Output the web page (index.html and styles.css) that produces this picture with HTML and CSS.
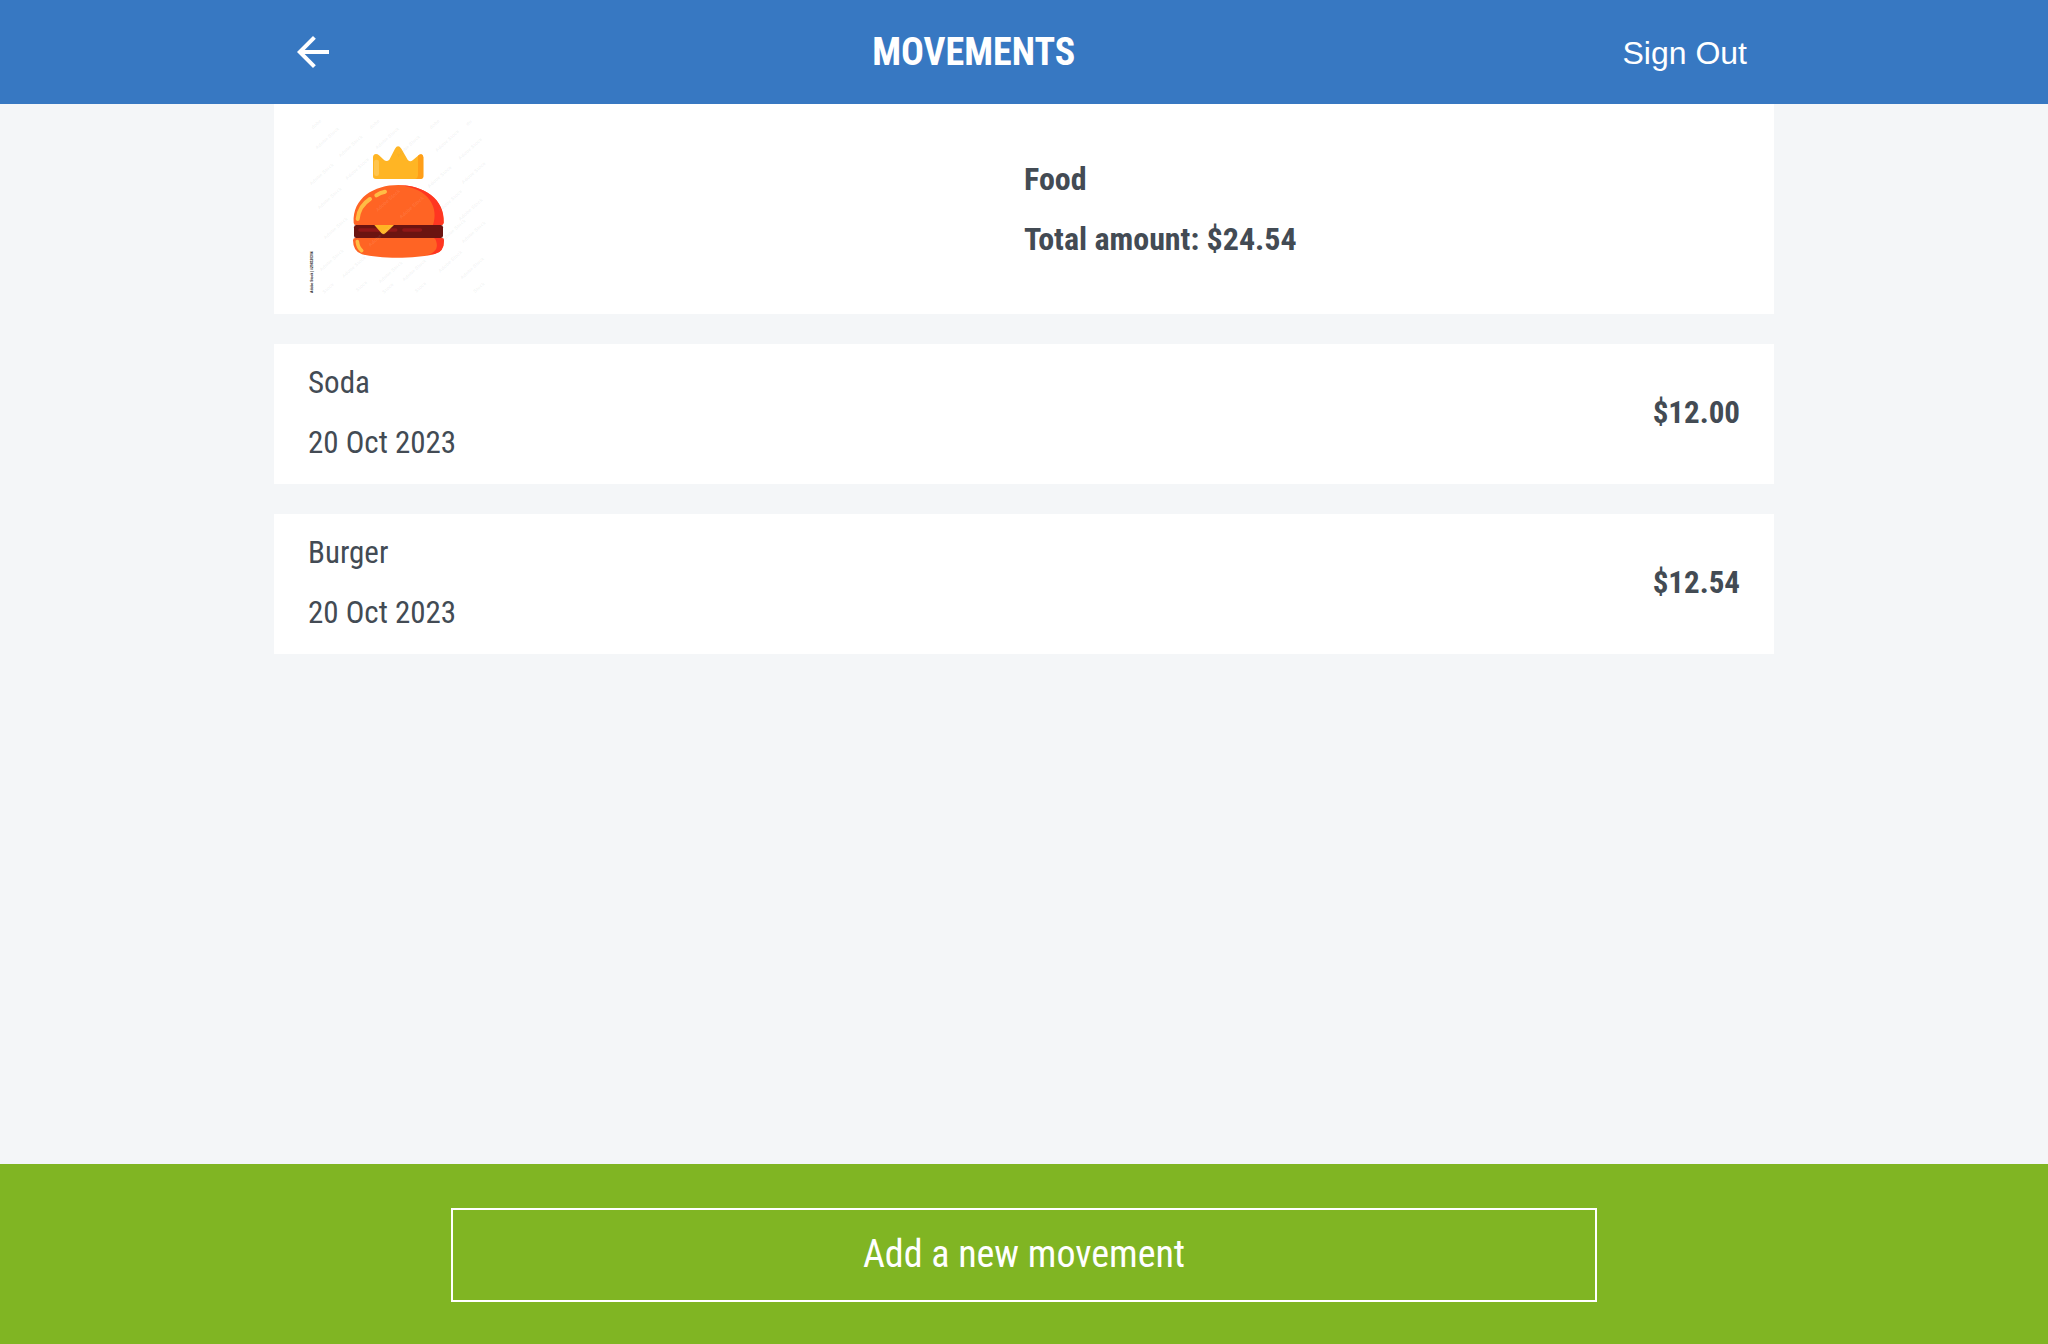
FILE: index.html
```html
<!DOCTYPE html>
<html lang="en">
<head>
<meta charset="utf-8">
<meta name="viewport" content="width=device-width, initial-scale=1">
<title>Movements</title>
<link rel="stylesheet" href="styles.css">
</head>
<body>
<header class="topbar">
  <nav class="topbar-inner">
    <a class="back" href="#" aria-label="Back">
      <svg class="back-icon" viewBox="0 0 24 24" aria-hidden="true"><path fill="currentColor" d="M20 11H7.83l5.59-5.59L12 4l-8 8 8 8 1.41-1.41L7.83 13H20v-2z"/></svg>
    </a>
    <h1 class="title">MOVEMENTS</h1>
    <button class="sign-out" type="button">Sign Out</button>
  </nav>
</header>
<main class="content">
  <section class="card summary">
    <div class="summary-half">
      <svg class="picture" viewBox="54 48 540 540" role="img" aria-label="Food">
        <path fill="#ffb524" d="M249 172Q249 163 258 162Q263 162 267 166L283 181Q291 186 298 179L315 146Q324 132 334 146L353 179Q360 187 368 181L384 167Q398 157 400 171V229Q400 237 391 237H258Q249 237 249 229Z"/>
        <path fill="#ff9e18" d="M384 167Q398 157 400 171V229Q400 237 391 237H376Q384 234 384 226Z"/>
        <rect fill="#ffc44d" x="252" y="179" width="15" height="49" rx="7"/>
        <path fill="#ff6424" d="M191 368C187 294 252 255 325 255S464 296 461 368Q460 375 454 375H197Q191 375 191 368Z"/>
        <path fill="#ff3621" d="M325 255C404 256 465 298 461 368Q460 375 454 375H429C446 326 421 264 325 255Z"/>
        <path fill="none" stroke="#ffbd45" stroke-width="12" stroke-linecap="round" d="M203 357Q207 318 240 297M259 286Q270 278 285 275"/>
        <rect fill="#6b1411" x="192" y="375" width="267" height="39" rx="7"/>
        <path fill="none" stroke="#8f1717" stroke-width="11" stroke-linecap="round" d="M210 390H317M342 390H391"/>
        <path fill="#ffb524" d="M253 375H312L286 400Q280 405 274 399Z"/>
        <path fill="#ff6424" d="M196 414H455Q462 414 462 421Q462 457 434 462C376 477 270 477 216 463Q189 455 189 421Q189 414 196 414Z"/>
        <path fill="#ff3621" d="M432 414H455Q462 414 462 421Q462 457 434 462L411 466Q448 454 439 425Q438 417 432 414Z"/>
        <path fill="none" stroke="#ffbd45" stroke-width="11" stroke-linecap="round" d="M202 425Q204 443 215 452"/>
        <g class="watermark">
          <text transform="translate(82 76) rotate(-42)">dobe</text>
          <text transform="translate(257 76) rotate(-42)">dobe</text>
          <text transform="translate(437 76) rotate(-42)">dobe</text>
          <text transform="translate(540 72) rotate(-42)">do</text>
          <text transform="translate(115 118) rotate(-42)">Adobe Stock</text>
          <text transform="translate(185 142) rotate(-42)">Adobe Stock</text>
          <text transform="translate(295 118) rotate(-42)">Adobe Stock</text>
          <text transform="translate(358 142) rotate(-42)">Adobe Stock</text>
          <text transform="translate(475 126) rotate(-42)">Adobe Stock</text>
          <text transform="translate(544 150) rotate(-42)">Adobe Stock</text>
          <text transform="translate(98 226) rotate(-42)">Adobe Stock</text>
          <text transform="translate(205 210) rotate(-42)">Adobe Stock</text>
          <text transform="translate(452 234) rotate(-42)">Adobe Stock</text>
          <text transform="translate(554 222) rotate(-42)">Adobe Stock</text>
          <text transform="translate(122 298) rotate(-42)">Adobe Stock</text>
          <text transform="translate(484 306) rotate(-42)">Adobe Stock</text>
          <text transform="translate(545 332) rotate(-42)">Adobe Stock</text>
          <text transform="translate(140 388) rotate(-42)">Adobe Stock</text>
          <text transform="translate(494 394) rotate(-42)">Adobe Stock</text>
          <text transform="translate(554 400) rotate(-42)">Adobe Stock</text>
          <text transform="translate(128 484) rotate(-42)">Adobe Stock</text>
          <text transform="translate(195 504) rotate(-42)">Adobe Stock</text>
          <text transform="translate(305 520) rotate(-42)">Adobe Stock</text>
          <text transform="translate(376 514) rotate(-42)">Adobe Stock</text>
          <text transform="translate(484 488) rotate(-42)">Adobe Stock</text>
          <text transform="translate(550 508) rotate(-42)">Adobe Stock</text>
          <text transform="translate(118 568) rotate(-42)">Stock</text>
          <text transform="translate(218 562) rotate(-42)">Stock</text>
          <text transform="translate(297 568) rotate(-42)">Stock</text>
          <text transform="translate(395 565) rotate(-42)">Stock</text>
          <text transform="translate(570 566) rotate(-42)">Stock</text>
        </g>
        <g class="watermark watermark-tint">
          <text transform="translate(297 305) rotate(-42)">Adobe Stock</text>
          <text transform="translate(368 326) rotate(-42)">Adobe Stock</text>
          <text transform="translate(275 410) rotate(-42)">Adobe Stock</text>
        </g>
        <text class="credit" transform="translate(70 579) rotate(-90)">Adobe Stock | #298320304</text>
      </svg>
    </div>
    <div class="summary-half lines">
      <h2 class="heading">Food</h2>
      <p class="heading">Total amount: $24.54</p>
    </div>
  </section>
  <article class="card">
    <div class="lines">
      <p>Soda</p>
      <p>20 Oct 2023</p>
    </div>
    <p class="amount">$12.00</p>
  </article>
  <article class="card">
    <div class="lines">
      <p>Burger</p>
      <p>20 Oct 2023</p>
    </div>
    <p class="amount">$12.54</p>
  </article>
</main>
<footer class="bottombar">
  <button class="add" type="button">Add a new movement</button>
</footer>
</body>
</html>
```
FILE: styles.css
```css
* {
  box-sizing: border-box;
  margin: 0;
}

body {
  display: flex;
  flex-direction: column;
  min-height: 100vh;
  background: #f4f6f8;
  color: #434b54;
  font-family: "Proxima Nova Condensed", "Roboto Condensed", "Liberation Sans Narrow", "Liberation Sans", sans-serif;
  font-size: 31px;
  line-height: 40px;
}

.topbar {
  background: #3778c2;
  color: #fff;
}

.topbar-inner {
  display: flex;
  align-items: center;
  justify-content: space-between;
  max-width: 1500px;
  height: 104px;
  margin: 0 auto;
  padding: 0 15px;
}

.back {
  display: flex;
  color: inherit;
}

.back-icon {
  width: 48px;
  height: 48px;
}

.title {
  font-size: 38px;
  line-height: 48px;
}

.sign-out {
  padding: 2px 12px 0;
  border: 0;
  background: none;
  color: inherit;
  font-family: "Liberation Sans", sans-serif;
  font-size: 32px;
  cursor: pointer;
}

.content {
  display: flex;
  flex: 1;
  flex-direction: column;
  gap: 30px;
  width: 100%;
  max-width: 1500px;
  margin: 0 auto;
  padding-bottom: 30px;
}

.card {
  display: flex;
  align-items: center;
  justify-content: space-between;
  padding: 19px 34px 21px;
  background: #fff;
}

.summary {
  padding: 0;
}

.summary-half {
  flex: 1;
}

.picture {
  display: block;
  width: 180px;
  height: 180px;
  margin: 12px 0 18px 34px;
}

.lines {
  display: flex;
  flex-direction: column;
  gap: 20px;
}

.heading {
  font-size: 32px;
  font-weight: 700;
}

.amount {
  font-weight: 700;
}

.watermark {
  fill: #8a8f98;
  fill-opacity: 0.1;
  font-family: "Liberation Sans", sans-serif;
  font-size: 15px;
  font-weight: 700;
  text-anchor: middle;
}

.watermark-tint {
  fill: #fff;
}

.credit {
  fill: #222;
  font-family: "Liberation Sans", sans-serif;
  font-size: 10px;
  font-weight: 700;
}

.bottombar {
  display: flex;
  justify-content: center;
  padding: 44px 0 42px;
  background: #80b523;
}

.add {
  width: 56%;
  padding: 20px 24px 22px;
  border: 2px solid #fff;
  background: none;
  color: #fff;
  font-family: inherit;
  font-size: 38px;
  line-height: 48px;
  cursor: pointer;
}
```
